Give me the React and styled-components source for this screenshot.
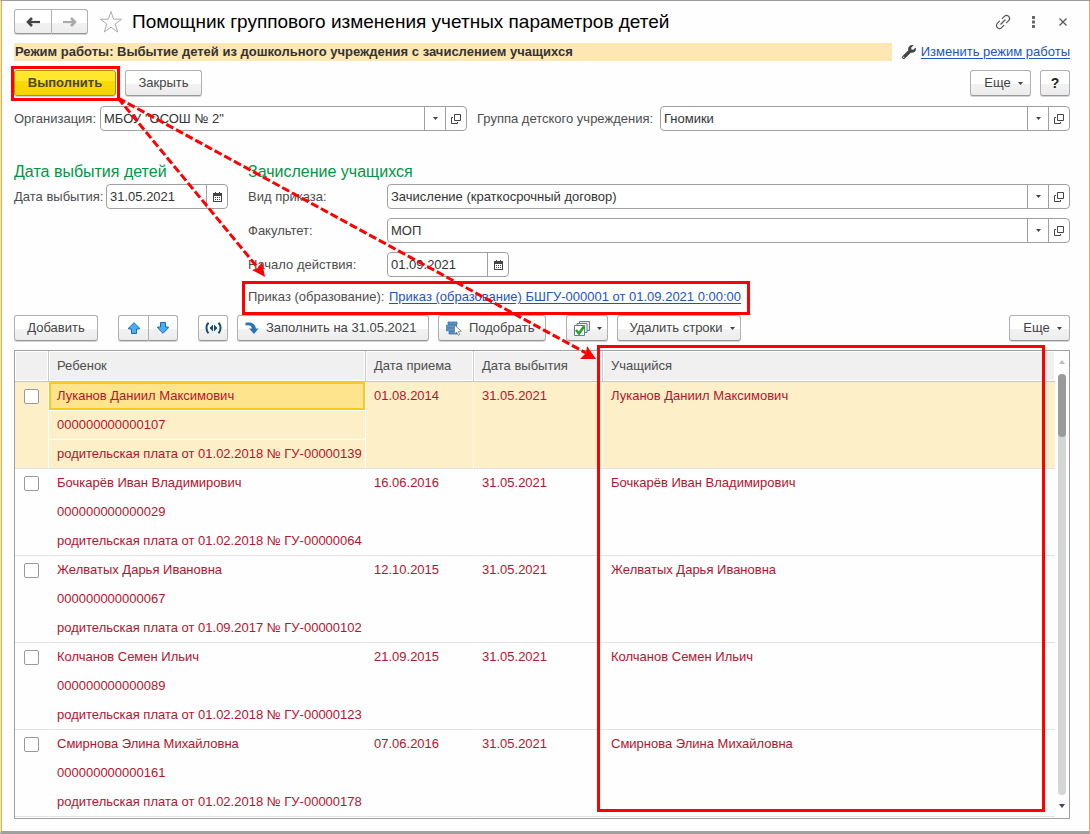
import React from 'react'
import styled, { createGlobalStyle, css } from 'styled-components'
import { FaWrench } from 'react-icons/fa'

const GlobalStyle = createGlobalStyle`
  * {
    box-sizing: border-box;
  }
  body {
    margin: 0;
    background: #fdfdfd;
    color: #4d4d4d;
    font: 13px/16px "Liberation Sans", Arial, sans-serif;
  }
  button, input {
    font: inherit;
    color: inherit;
  }
`

const Window = styled.main`
  position: relative;
  min-height: 100vh;
  padding: 8px 19px 12px 13px;
  background: #fefefe;
  border: 1px solid #c8b66e;
  border-left-color: #fde3a4;
  border-top-color: #9c9c9c;
  border-bottom: 3px solid #a0a0a0;
  box-shadow: inset 1px 0 #cdb368;
`

const Title = styled.h1`
  margin: 0 auto 0 9px;
  color: #000;
  font-size: 19px;
  line-height: 24px;
  font-weight: normal;
  white-space: nowrap;
`

const Button = styled.button`
  display: inline-flex;
  align-items: center;
  justify-content: center;
  flex: none;
  width: ${p => p.$w ? `${p.$w}px` : 'auto'};
  height: 26px;
  padding: 0;
  gap: 7px;
  color: #444;
  white-space: nowrap;
  border: 1px solid #b0b0b0;
  border-bottom-color: #989898;
  border-radius: 3px;
  background: linear-gradient(#fff 55%, #f2f2f2 56%, #ececec);
  box-shadow: 0 1px 0 #d2d2d2;
  ${p => p.$primary && css`
    color: #4d4632;
    font-weight: bold;
    border-color: #a89410;
    background: linear-gradient(#ffe72e 40%, #f8dc00 41%, #f4d400);
  `}
  ${p => p.$menu && css`
    padding-left: 6px;
  `}
  ${p => p.$icon && css`
    justify-content: flex-start;
    padding-left: 7px;
  `}
`

const Header = styled.header`
  display: flex;
  align-items: center;
  height: 25px;
  ${Button} {
    height: 25px;
  }
`

const HelpButton = styled(Button)`
  color: #222;
  font-size: 14px;
  font-weight: bold;
`

const ButtonGroup = styled.div`
  display: flex;
  flex: none;
  ${Button}:first-child {
    border-radius: 3px 0 0 3px;
  }
  ${Button}:last-child {
    border-left: 0;
    border-radius: 0 3px 3px 0;
  }
`

const IconButton = styled.button`
  display: flex;
  align-items: center;
  justify-content: center;
  width: 30px;
  height: 24px;
  padding: 0;
  border: 0;
  background: none;
`

const StarButton = styled(IconButton)`
  width: 24px;
  margin-left: 11px;
`

const WindowTools = styled.div`
  display: flex;
  margin-right: -8px;
`

const ModeBar = styled.div`
  display: flex;
  align-items: center;
  gap: 10px;
  margin-top: 9px;
  height: 18px;
`

const Mode = styled.p`
  flex: 1;
  margin: 0;
  padding-left: 1px;
  line-height: 18px;
  font-weight: bold;
  color: #333;
  background: #ffe7b3;
  white-space: nowrap;
`

const ModeLink = styled.span`
  display: flex;
  align-items: center;
  gap: 5px;
  color: #444;
`

const Link = styled.a`
  color: #1a55c0;
  text-decoration: underline;
  text-underline-offset: 2px;
  white-space: nowrap;
`

const Commands = styled.div`
  display: flex;
  gap: 9px;
  margin-top: 9px;
`

const Toolbar = styled.div`
  display: flex;
  gap: 9px;
  margin-top: 7px;
`

const Spacer = styled.div`
  flex: ${p => p.$w ? 'none' : 1};
  width: ${p => p.$w || 0}px;
`

const Marked = styled.div`
  position: relative;
  display: flex;
  align-items: center;
  width: fit-content;
`

const OrderRow = styled(Marked)`
  height: 22px;
`

// красная рамка поверх элемента
const Frame = styled.div`
  position: absolute;
  inset: ${p => p.$inset};
  border: 3px solid #f00;
  pointer-events: none;
`

const Filters = styled.div`
  display: flex;
  align-items: center;
  margin-top: 10px;
`

const Label = styled.label`
  flex: none;
  width: ${p => p.$w}px;
  white-space: nowrap;
`

const FieldBox = styled.div`
  display: flex;
  flex: ${p => p.$w ? 'none' : 1};
  width: ${p => p.$w ? `${p.$w}px` : 'auto'};
  height: 25px;
  border: 1px solid #a0a0a0;
  border-radius: 4px;
  background: #fff;
`

const Input = styled.input`
  flex: 1;
  width: 0;
  padding: 0 3px;
  border: 0;
  outline: 0;
  background: none;
  color: #333;
`

const FieldButton = styled.button`
  display: flex;
  align-items: center;
  justify-content: center;
  width: 21px;
  padding: 0;
  border: 0;
  border-left: 1px solid #a0a0a0;
  background: none;
`

const Columns = styled.div`
  display: grid;
  grid-template-columns: 214px 1fr;
  gap: 20px;
  margin-top: 31px;
`

const SectionTitle = styled.h2`
  margin: 0 0 3px;
  color: #009646;
  font-size: 16px;
  line-height: 19px;
  font-weight: normal;
  white-space: nowrap;
`

const Row = styled.div`
  display: flex;
  align-items: center;
  margin-bottom: 9px;
`

const TableBox = styled.div`
  position: relative;
  display: flex;
  margin-top: 9px;
  padding-bottom: 1px;
  border: 1px solid #a0a0a0;
  background: #fefefe;
`

const Table = styled.table`
  flex: 1;
  width: 100%;
  table-layout: fixed;
  border-collapse: separate;
  border-spacing: 0;
`

const Th = styled.th`
  height: 31px;
  padding: 0 8px;
  font-weight: normal;
  text-align: left;
  background: #f0f0f0;
  border-right: 1px solid #ccc;
  border-bottom: 1px solid #c4c4c4;
  box-shadow: inset 0 0 0 1px #fff;
  &:last-child {
    border-right: 0;
  }
`

const Td = styled.td`
  height: 87px;
  padding: 0;
  vertical-align: top;
  color: #b4142d;
  border-bottom: 1px solid #e2e2e2;
  border-right: 1px solid ${p => p.$selected ? '#fff' : 'transparent'};
  background: ${p => p.$selected ? '#fdf0c8' : 'none'};
  background-clip: padding-box;
  &:last-child {
    border-right: 0;
  }
`

const Line = styled.div`
  height: 29px;
  padding: 0 8px;
  line-height: 28px;
  white-space: nowrap;
  border-bottom: 1px solid ${p => p.$ruled ? '#fff' : 'transparent'};
  &:last-child {
    height: 28px;
    border-bottom: 0;
  }
`

const ActiveLine = styled(Line)`
  height: 28px;
  margin-bottom: 1px;
  padding: 0 6px;
  line-height: 24px;
  border: 2px solid #fac81e;
  background: #ffe48e;
  box-shadow: 0 1px #fff;
`

const Check = styled.input`
  appearance: none;
  display: block;
  width: 15px;
  height: 15px;
  margin: 7px 0 0 9px;
  border: 1px solid #999;
  border-radius: 2px;
  background: #fff;
`

const ScrollBar = styled.div`
  display: flex;
  flex: none;
  flex-direction: column;
  align-items: center;
  width: 14px;
  padding: 9px 0;
`

const Track = styled.div`
  flex: 1;
  width: 8px;
  margin: 10px 0 9px;
  border-radius: 4px;
  background: #d4d6d5;
`

const Thumb = styled.div`
  height: 63px;
  border-radius: 4px;
  background: #9a9a9a;
`

const Arrows = styled.svg`
  position: absolute;
  top: -1px;
  left: -1px;
  pointer-events: none;
`

const Caret = () => (
  <svg width="5" height="3" viewBox="0 0 5 3"><path d="M0 0h5L2.5 3z" fill="#444" /></svg>
)

const OpenIcon = () => (
  <svg width="10" height="10" viewBox="0 0 10 10" fill="none" stroke="#444">
    <path d="M3.5.5h6v6h-6zM2 3.500H.5v6h6V8" />
  </svg>
)

const CalendarIcon = () => (
  <svg width="9" height="10" viewBox="0 0 9 10" shapeRendering="crispEdges">
    <path d="M0 1h9v9H0z" fill="#444" />
    <path d="M1 4h7v5H1z" fill="#fff" />
    <path d="M2.500 0v2M6.500 0v2" stroke="#444" />
    <path d="M2 5.500h5M2 7.500h5" stroke="#444" strokeDasharray="1 1" />
  </svg>
)

const HistoryArrow = ({ color, flip }) => (
  <svg width="15" height="12" viewBox="0 0 15 12" fill="none" stroke={color}>
    <g transform={flip ? 'matrix(-1 0 0 1 15 0)' : undefined}>
      <path d="M2 6h12" strokeWidth="2.200" />
      <path d="M6 2L2 6l4 4" strokeWidth="2.600" />
    </g>
  </svg>
)

const StarIcon = () => (
  <svg width="24" height="24" viewBox="0 0 24 24" fill="none" stroke="#aaa">
    <path d="M12 1.500l2.600 7.700h8l-6.400 4.800 2.500 8-6.700-4.900-6.700 4.900 2.500-8L1.400 9.200h8z" />
  </svg>
)

const ChainIcon = () => (
  <svg width="18" height="18" viewBox="0 0 18 18" fill="none" stroke="#555" strokeWidth="1.200">
    <g transform="rotate(-45 9 9)">
      <path d="M7.500 6H4a3 3 0 000 6h3.500M10.500 6H14a3 3 0 010 6h-3.500M5.500 9h7" />
    </g>
  </svg>
)

const DotsIcon = () => (
  <svg width="3" height="12" viewBox="0 0 3 12" fill="#666">
    <path d="M0 0h3v3H0zM0 4.500h3v3H0zM0 9h3v3H0z" />
  </svg>
)

const CloseIcon = () => (
  <svg width="8" height="8" viewBox="0 0 8 8" stroke="#555" strokeWidth="1.200">
    <path d="M.5.5l7 7M7.500.5l-7 7" />
  </svg>
)

const MoveIcon = ({ down }) => (
  <svg width="12" height="12" viewBox="0 0 12 12" fill="#48aef5" stroke="#1c6ba8">
    <path d="M6 .7l5.300 5.300v1H8.500v4.500h-5V7H.7V6z" transform={down ? 'rotate(180 6 6)' : undefined} />
  </svg>
)

const SignalIcon = () => (
  <svg width="17" height="12" viewBox="0 0 17 12" fill="none" stroke="#174a70" strokeWidth="2">
    <path d="M3.500.7C.8 3.500.8 8.500 3.500 11.300M13.500.7c2.700 2.800 2.700 7.800 0 10.600" />
    <path d="M8 2.500v7L4.500 6zM9 2.500v7L12.500 6z" fill="#174a70" stroke="none" />
  </svg>
)

const FillIcon = () => (
  <svg width="14" height="13" viewBox="0 0 14 13">
    <path d="M.5.800C6-.6 10.500 1.500 10.800 6.500h2.700L9 12 4 6.500h2.800C6.700 3.800 4.500 2.600.5 3.500z" fill="#2a75b0" />
  </svg>
)

const PickIcon = () => (
  <svg width="16" height="15" viewBox="0 0 16 15">
    <path d="M2 1h9v2.400H2zM.5 4.200h10v2.400H.5zM.5 7.400h10v2.400H.5zM3 10.600h8V13H3z" fill="#5a9bd0" stroke="#2a6699" strokeWidth=".7" />
    <path d="M8.500 4v9l2.200-1.900 1.500 3.200 1.600-.7-1.500-3.100 3-.300z" fill="#fff" stroke="#777" strokeWidth=".8" />
  </svg>
)

const CheckAllIcon = () => (
  <svg width="16" height="15" viewBox="0 0 16 15" stroke="#5d8090">
    <path d="M5.500.5h10v9h-10z" fill="#e8f0ee" />
    <path d="M3 2.500h10v9H3z" fill="#e8f0ee" />
    <path d="M.5 4.500h10v10H.5z" fill="#fff" />
    <path d="M2 9l3 3.500L10 5.500" fill="none" stroke="#2ba020" strokeWidth="2.600" />
  </svg>
)

function Field({ id, value, width, date }) {
  return (
    <FieldBox $w={width}>
      <Input id={id} defaultValue={value} />
      {date ? (
        <FieldButton aria-label="Календарь"><CalendarIcon /></FieldButton>
      ) : (
        <>
          <FieldButton aria-label="Выбрать"><Caret /></FieldButton>
          <FieldButton aria-label="Открыть"><OpenIcon /></FieldButton>
        </>
      )}
    </FieldBox>
  )
}

const children = [
  { name: 'Луканов Даниил Максимович', code: '000000000000107', fee: 'родительская плата от 01.02.2018 № ГУ-00000139', from: '01.08.2014', to: '31.05.2021' },
  { name: 'Бочкарёв Иван Владимирович', code: '000000000000029', fee: 'родительская плата от 01.02.2018 № ГУ-00000064', from: '16.06.2016', to: '31.05.2021' },
  { name: 'Желватых Дарья Ивановна', code: '000000000000067', fee: 'родительская плата от 01.09.2017 № ГУ-00000102', from: '12.10.2015', to: '31.05.2021' },
  { name: 'Колчанов Семен Ильич', code: '000000000000089', fee: 'родительская плата от 01.02.2018 № ГУ-00000123', from: '21.09.2015', to: '31.05.2021' },
  { name: 'Смирнова Элина Михайловна', code: '000000000000161', fee: 'родительская плата от 01.02.2018 № ГУ-00000178', from: '07.06.2016', to: '31.05.2021' },
]

function ChildRow({ child, selected }) {
  const NameLine = selected ? ActiveLine : Line
  return (
    <tr>
      <Td $selected={selected}><Check type="checkbox" aria-label={child.name} /></Td>
      <Td $selected={selected}>
        <NameLine>{child.name}</NameLine>
        <Line $ruled={selected}>{child.code}</Line>
        <Line>{child.fee}</Line>
      </Td>
      <Td $selected={selected}><Line>{child.from}</Line></Td>
      <Td $selected={selected}><Line>{child.to}</Line></Td>
      <Td $selected={selected}><Line>{child.name}</Line></Td>
    </tr>
  )
}

function ChildrenTable() {
  return (
    <TableBox>
      <Table>
        <colgroup>
          <col width="34" />
          <col width="317" />
          <col width="108" />
          <col width="129" />
          <col />
        </colgroup>
        <thead>
          <tr>
            <Th aria-label="Отметка" />
            <Th>Ребенок</Th>
            <Th>Дата приема</Th>
            <Th>Дата выбытия</Th>
            <Th>Учащийся</Th>
          </tr>
        </thead>
        <tbody>
          {children.map((child, i) => <ChildRow key={child.code} child={child} selected={i === 0} />)}
        </tbody>
      </Table>
      <ScrollBar>
        <svg width="6" height="4" viewBox="0 0 6 4"><path d="M0 4h6L3 0z" fill="#bbb" /></svg>
        <Track><Thumb /></Track>
        <svg width="6" height="4" viewBox="0 0 6 4"><path d="M0 0h6L3 4z" fill="#445" /></svg>
      </ScrollBar>
      <Frame $inset="-6px 24px 6px 582px" />
    </TableBox>
  )
}

function App() {
  return (
    <Window>
      <GlobalStyle />
      <Header>
        <ButtonGroup>
          <Button $w={38} aria-label="Назад"><HistoryArrow color="#444" /></Button>
          <Button $w={36} aria-label="Вперед"><HistoryArrow color="#aaa" flip /></Button>
        </ButtonGroup>
        <StarButton aria-label="Избранное"><StarIcon /></StarButton>
        <Title>Помощник группового изменения учетных параметров детей</Title>
        <WindowTools>
          <IconButton aria-label="Ссылка"><ChainIcon /></IconButton>
          <IconButton aria-label="Меню"><DotsIcon /></IconButton>
          <IconButton aria-label="Закрыть окно"><CloseIcon /></IconButton>
        </WindowTools>
      </Header>
      <ModeBar>
        <Mode>Режим работы: Выбытие детей из дошкольного учреждения с зачислением учащихся</Mode>
        <ModeLink><FaWrench size={14} /><Link href="#mode">Изменить режим работы</Link></ModeLink>
      </ModeBar>
      <Commands>
        <Marked>
          <Button $w={102} $primary>Выполнить</Button>
          <Frame $inset="-4px -4px -5px -3px" />
        </Marked>
        <Button $w={77}>Закрыть</Button>
        <Spacer />
        <Button $w={61} $menu>Еще <Caret /></Button>
        <HelpButton $w={30}>?</HelpButton>
      </Commands>
      <Filters>
        <Label $w={86} htmlFor="org">Организация:</Label>
        <Field id="org" value={'МБОУ "ОСОШ № 2"'} width={367} />
        <Spacer $w={10} />
        <Label $w={183} htmlFor="group">Группа детского учреждения:</Label>
        <Field id="group" value="Гномики" />
      </Filters>
      <Columns>
        <section>
          <SectionTitle>Дата выбытия детей</SectionTitle>
          <Row>
            <Label $w={92} htmlFor="leave">Дата выбытия:</Label>
            <Field id="leave" value="31.05.2021" width={122} date />
          </Row>
        </section>
        <section>
          <SectionTitle>Зачисление учащихся</SectionTitle>
          <Row>
            <Label $w={139} htmlFor="kind">Вид приказа:</Label>
            <Field id="kind" value="Зачисление (краткосрочный договор)" />
          </Row>
          <Row>
            <Label $w={139} htmlFor="faculty">Факультет:</Label>
            <Field id="faculty" value="МОП" />
          </Row>
          <Row>
            <Label $w={139} htmlFor="start">Начало действия:</Label>
            <Field id="start" value="01.09.2021" width={122} date />
          </Row>
          <OrderRow>
            <Label as="span" $w={141}>Приказ (образование):</Label>
            <Link href="#order">Приказ (образование) БШГУ-000001 от 01.09.2021 0:00:00</Link>
            <Frame $inset="-5px -9px -7px -6px" />
          </OrderRow>
        </section>
      </Columns>
      <Toolbar>
        <Button $w={84}>Добавить</Button>
        <Spacer $w={2} />
        <ButtonGroup>
          <Button $w={31} aria-label="Вверх"><MoveIcon /></Button>
          <Button $w={29} aria-label="Вниз"><MoveIcon down /></Button>
        </ButtonGroup>
        <Spacer $w={2} />
        <Button $w={30} aria-label="Оповещение"><SignalIcon /></Button>
        <Button $w={192} $icon><FillIcon />Заполнить на 31.05.2021</Button>
        <Button $w={108} $icon><PickIcon />Подобрать</Button>
        <Spacer $w={2} />
        <Button $w={42} $icon aria-label="Отметить"><CheckAllIcon /><Caret /></Button>
        <Button $w={124} $menu>Удалить строки <Caret /></Button>
        <Spacer />
        <Button $w={61} $menu>Еще <Caret /></Button>
      </Toolbar>
      <ChildrenTable />
      <Arrows width="620" height="380" viewBox="0 0 620 380">
        <g stroke="#f00" strokeWidth="3" strokeDasharray="8 3">
          <path d="M118 98L258 268" />
          <path d="M118 98L586 353" />
        </g>
        <path d="M265 277L252 270L258 268L262 262z" fill="#f00" />
        <path d="M596 359L580 359L586 353L587 346z" fill="#f00" />
      </Arrows>
    </Window>
  )
}

export default App
